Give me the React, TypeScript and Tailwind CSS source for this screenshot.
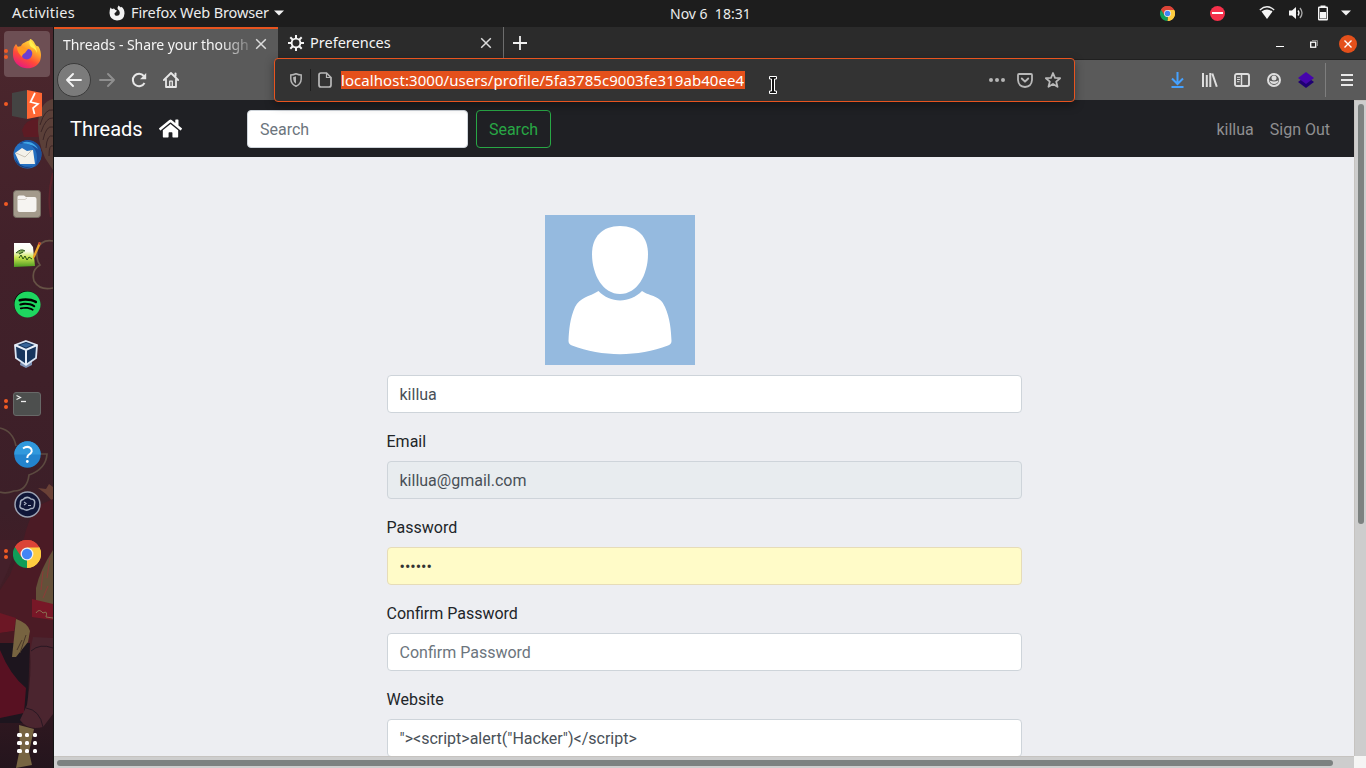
import React from "react";
import { FaHome, FaSpotify } from "react-icons/fa";

const UI = "font-['Noto_Sans','Open_Sans',sans-serif]";

function ChromeIcon({ size }: { size: number }) {
  return (
    <svg width={size} height={size} viewBox="0 0 48 48">
      <path d="M24 24L3.2 12A24 24 0 0 1 44.8 12Z" fill="#db4437" />
      <path d="M24 24L44.8 12A24 24 0 0 1 24 48Z" fill="#ffcd40" />
      <path d="M24 24L24 48A24 24 0 0 1 3.2 12Z" fill="#0f9d58" />
      <path d="M24 13H45.3A24 24 0 0 0 3.2 12L14.5 29.5Z" fill="#db4437" />
      <path d="M33.5 29.5L24 48A24 24 0 0 0 45.3 13H24Z" fill="#ffcd40" />
      <circle cx="24" cy="24" r="11" fill="#f1f1f1" />
      <circle cx="24" cy="24" r="8.8" fill="#4285f4" />
    </svg>
  );
}

function FirefoxIcon() {
  return (
    <svg width="30" height="31" viewBox="0 0 30 31" className="-mt-0.5">
      <defs>
        <linearGradient id="ff" x1="0.8" y1="0" x2="0.25" y2="1">
          <stop offset="0" stopColor="#fff44f" />
          <stop offset="0.35" stopColor="#ffa62a" />
          <stop offset="0.65" stopColor="#ff4a38" />
          <stop offset="1" stopColor="#e31587" />
        </linearGradient>
      </defs>
      <path d="M2 9L4 6L6 9L9 8C10 5 14 4 18 2C17 0 20 1 22 4C24 8 25 9 26 8C29 12 30 18 28 23C25 29 19 31 13 30C6 29 1 23 1 17C1 14 1 11 2 9Z" fill="url(#ff)" />
      <path d="M16 11C19 11 21 14 20 17C19 21 15 23 11 20C9 18 9 15 10 13Z" fill="#6b3fd1" />
      <path d="M5 9C9 8 11 10 16 11L13 15C11 16 10 17 10 19C7 16 5 13 5 9Z" fill="#ff9a22" />
      <path d="M18 2C21 6 25 9 25 15C24 12 22 10 19 9C17 7 17 4 18 2Z" fill="#fff04d" />
    </svg>
  );
}

function BurpIcon() {
  return (
    <svg width="30" height="29" viewBox="0 0 30 29">
      <path d="M0 3L15 0V29L0 26Z" fill="#444443" />
      <path d="M15 0L30 3V26L15 29Z" fill="#ff6633" />
      <path d="M23 3L18.500 12L26 14L21 18L22.500 24" fill="none" stroke="#fff" strokeWidth="1.700" />
    </svg>
  );
}

function MailIcon() {
  return (
    <svg width="31" height="31" viewBox="0 0 31 31">
      <circle cx="15.500" cy="15.500" r="14" fill="#246fc0" />
      <path d="M7 5C13 -2 24 1 28 8C31 15 29 23 23 28C26 20 26 12 20 7C16 4 11 4 7 5Z" fill="#1a4f9d" />
      <path d="M10 4C16 1 23 4 26 10C22 6 16 5 10 4Z" fill="#3fa6e8" />
      <path d="M3 14L10 9L15 12L21 11L23 25L8 25Z" fill="#f4f1ea" />
      <path d="M4 14L13 18L20 11" fill="none" stroke="#c9c2b6" />
      <path d="M3 19C7 28 15 29 21 27C16 31 4 29 3 19Z" fill="#153f7f" />
    </svg>
  );
}

function FilesIcon() {
  return (
    <svg width="28" height="28" viewBox="0 0 28 28">
      <rect x="0.500" y="0.500" width="27" height="27" rx="3" fill="#a39a8b" stroke="#777064" />
      <path d="M4.500 7Q4.500 5.500 6 5.500H11L13 7H21.500Q23.500 7 23.500 9V20Q23 22 21 22H6.500Q4.500 22 4.500 20Z" fill="#f6f4f1" />
      <path d="M5 9.500H12L14 8" fill="none" stroke="#d5d0c7" />
    </svg>
  );
}

function NotepadIcon() {
  return (
    <svg width="28" height="28" viewBox="0 0 28 28">
      <defs>
        <linearGradient id="np" x1="0" y1="0" x2="0" y2="1">
          <stop offset="0" stopColor="#fff" />
          <stop offset="0.35" stopColor="#f8fbea" />
          <stop offset="0.6" stopColor="#cbe64f" />
          <stop offset="1" stopColor="#4d9b22" />
        </linearGradient>
      </defs>
      <path d="M1 3L17 3L20 7L22 26L1 27Z" fill="url(#np)" />
      <path d="M3 13Q8 8 12 11Q9 15 3 13" fill="#8cb35a" />
      <path d="M3 13Q8 8 12 11M6 14L10 12M6 18L8 15L10 19L12 16L14 20L16 17L19 19" fill="none" stroke="#245018" strokeWidth="1" />
      <path d="M26 2L28 3L22 17L20 19L20 16Z" fill="#eda528" />
      <path d="M26 2L28 3L27 5L25 4Z" fill="#c13b31" />
    </svg>
  );
}

function BoxIcon() {
  return (
    <svg width="26" height="29" viewBox="0 0 26 29" className="-ml-[3px]">
      <path d="M8 20L7 25L13 28L19 25V20Z" fill="#7d91b4" />
      <path d="M13 1L24 5L23 18L13 25L3 18L2 5Z" fill="#17355d" stroke="#dbe6f4" strokeWidth="1.800" />
      <path d="M2 5L13 10L24 5M13 10V25" fill="none" stroke="#e9f0fa" strokeWidth="2" />
      <path d="M7 5L13 3L19 5L13 7.500Z" fill="#38659a" />
    </svg>
  );
}

function TerminalIcon() {
  return (
    <svg width="28" height="24" viewBox="0 0 28 24">
      <rect x="0.500" y="0.500" width="27" height="23" rx="2.500" fill="#4d4f4e" stroke="#686968" />
      <path d="M3.500 3.500L7.500 5.500L3.500 7.500" fill="none" stroke="#eee" strokeWidth="1.200" />
      <path d="M8 9.500H13" stroke="#eee" strokeWidth="1.300" />
    </svg>
  );
}

function HelpIcon() {
  return (
    <svg width="27" height="27" viewBox="0 0 27 27">
      <circle cx="13.500" cy="13.500" r="13.200" fill="#2384ce" />
      <path d="M0.300 13.500A13.200 13.200 0 0 1 26.700 13.500Z" fill="#3199dd" />
      <path d="M9 7.500Q13 4.500 16.500 7Q20 10.500 14.500 14Q13.300 15 13.300 17" fill="none" stroke="#fff" strokeWidth="2" />
      <circle cx="13.300" cy="20.500" r="1.400" fill="#fff" />
    </svg>
  );
}

function CloudIcon() {
  return (
    <svg width="27" height="27" viewBox="0 0 27 27">
      <circle cx="13.500" cy="13.500" r="12.500" fill="#101638" stroke="#9ca3b3" strokeWidth="1.500" />
      <path d="M9 8.500Q13 4.500 17 8Q21.500 8 20.500 13Q20.500 18 17 17.500Q13 20.500 9.500 18Q4.500 17.500 6.500 13Q6 9 9 8.500Z" fill="none" stroke="#a8b0c0" strokeWidth="1.500" />
      <path d="M10 11L12 12.500L10 14M14 14.500H17" fill="none" stroke="#a8b0c0" strokeWidth="1.200" />
    </svg>
  );
}

const dock: { icon: React.ReactNode; dots: number; active?: boolean }[] = [
  { icon: <FirefoxIcon />, dots: 2, active: true },
  { icon: <BurpIcon />, dots: 1 },
  { icon: <MailIcon />, dots: 0 },
  { icon: <FilesIcon />, dots: 1 },
  { icon: <NotepadIcon />, dots: 0 },
  {
    icon: (
      <span className="flex size-[26px] items-center justify-center rounded-full bg-black">
        <FaSpotify size={27} className="shrink-0 text-[#1ed760]" />
      </span>
    ),
    dots: 0,
  },
  { icon: <BoxIcon />, dots: 0 },
  { icon: <TerminalIcon />, dots: 2 },
  { icon: <HelpIcon />, dots: 0 },
  { icon: <CloudIcon />, dots: 0 },
  { icon: <ChromeIcon size={28} />, dots: 2 },
];

function DockArt() {
  return (
    <svg className="absolute inset-0" width="53" height="741" viewBox="0 27 53 741">
      <defs>
        <linearGradient id="dk" x1="0" y1="0" x2="0" y2="1">
          <stop offset="0" stopColor="#4c272d" />
          <stop offset="0.3" stopColor="#42212a" />
          <stop offset="0.65" stopColor="#3c1f28" />
          <stop offset="0.8" stopColor="#431c25" />
          <stop offset="1" stopColor="#24151d" />
        </linearGradient>
      </defs>
      <rect y="27" width="53" height="741" fill="url(#dk)" />
      <path d="M22 130Q26 118 39 119V137H24Z" fill="#5d1b24" />
      <path d="M53 99Q40 102 38 122Q37 140 45 158L53 170Z" fill="#5b4039" />
      <path d="M40 125Q45 108 53 110M41 132Q46 117 53 118M43 140Q46 125 53 127M46 148Q47 134 53 136M49 156Q49 144 53 146" fill="none" stroke="#3b2526" />
      <path d="M53 173Q47 195 51 217" fill="none" stroke="#5d222b" strokeWidth="2" />
      <path d="M53 241Q41 239 37 250Q36 260 40 265Q31 270 34 281Q40 291 53 288" fill="none" stroke="#665245" strokeWidth="1.700" />
      <path d="M0 428Q13 431 16 446M35 454H47Q46 469 29 475Q27 491 14 491Q6 494 0 492" fill="none" stroke="#5c4a40" strokeWidth="1.700" />
      <path d="M38 488L46 489L49 484L53 487V502L46 494Z" fill="#6a4136" />
      <path d="M53 499L37 506Q28 520 24 538L10 575L0 590V650H31L53 640Z" fill="#4b1b25" />
      <path d="M0 540V587Q13 562 17 540Z" fill="#44202a" />
      <path d="M53 550Q40 570 36 588V602L53 610Z" fill="#645039" />
      <path d="M50 558L47 578M43 571L41 590M48 586L43 598" stroke="#8d3b38" fill="none" />
      <path d="M32 599L53 604V620L32 617Z" fill="#781727" />
      <path d="M36 613Q39 608 43 613Q48 610 46 617L53 618" fill="none" stroke="#897052" />
      <path d="M0 613L16 618L14 631L0 633Z" fill="#6c1725" />
      <path d="M0 633L14 631V643H0Z" fill="#491922" />
      <path d="M0 643H30L27 723H0Z" fill="#1d151e" />
      <path d="M0 650Q10 675 26 688L24 713L0 718Z" fill="#581122" />
      <path d="M16 619Q28 623 30 631L28 642L16 657L12 657L14 638Z" fill="#776340" />
      <path d="M22 640L17 650M26 635L20 653" stroke="#493829" fill="none" />
      <path d="M33 637L53 638V714L43 727Q28 731 20 720L27 705Q32 672 30 651Z" fill="#4b252f" />
      <path d="M31 651Q40 643 53 648M26 708Q40 710 43 727" fill="none" stroke="#291722" />
      <path d="M19 725L34 729L29 752L32 765L16 768L20 748Z" fill="#776542" />
    </svg>
  );
}

function Dock() {
  return (
    <aside className="relative flex w-[54px] shrink-0 flex-col border-r border-[#151515] bg-[#42212a]">
      <DockArt />
      <div className="relative flex flex-1 flex-col pt-0.5">
        {dock.map((d, i) => (
          <div key={i} className="flex h-[50px] items-center pl-1">
            <div className="-mr-px flex w-0 flex-col gap-0.5">
              {Array.from({ length: d.dots }, (_, k) => (
                <i key={k} className="size-1 shrink-0 rounded-full bg-[#f15a24]" />
              ))}
            </div>
            <div
              className={
                d.active
                  ? "ml-px flex size-[46px] items-center justify-center rounded bg-[#6d4f54]"
                  : "ml-px flex size-[46px] items-center justify-center"
              }
            >
              {d.icon}
            </div>
            {d.active && (
              <div className="-ml-[46px] flex w-1 flex-col gap-0.5">
                <i className="size-1 rounded-full bg-[#f15a24]" />
                <i className="size-1 rounded-full bg-[#f15a24]" />
              </div>
            )}
          </div>
        ))}
        <div className="mt-auto mb-[15px] ml-[17px] grid w-5 grid-cols-3 gap-[3.500px]">
          {Array.from({ length: 9 }, (_, k) => (
            <i key={k} className="size-[4.500px] rounded-[1.500px] bg-white" />
          ))}
        </div>
      </div>
    </aside>
  );
}

function TopBar() {
  return (
    <header className={`flex h-[27px] shrink-0 items-center bg-[#1d1d1d] pb-px text-[14.500px] text-[#ececec] ${UI}`}>
      <div className="flex w-[600px] items-center pl-3">
        <span className="w-[97px] whitespace-nowrap tracking-[0.250px]">Activities</span>
        <svg width="16" height="16" viewBox="0 0 16 16" fill="#f2f2f2">
          <path d="M1.500 2.500L3 4L5 3.600L6.500 5L8 5.600L7 7L5.500 8.200Q5.500 10.800 8 10.800Q10.800 10.600 10.800 7.800Q10.600 5.500 9 4.500Q8 2.500 9.500 0.500Q10.500 1.500 12 2.500L12.500 1.800Q15.500 4 15.500 8.500Q15 15.500 8 15.500Q0.800 15 0.500 8Q0.500 5 1.500 2.500Z" />
        </svg>
        <span className="ml-1.5 w-[138px] whitespace-nowrap tracking-[-0.120px]">Firefox Web Browser</span>
        <svg className="ml-[5px]" width="10" height="6" viewBox="0 0 10 6"><path d="M0 0.500H10L5 5.500Z" fill="#f2f2f2" /></svg>
      </div>
      <span className="ml-[70px] w-[80px] whitespace-pre text-[14px]">Nov 6  18:31</span>
      <div className="ml-auto flex items-center pr-[15px]">
        <ChromeIcon size={15} />
        <span className="ml-[35px] flex size-[15px] items-center justify-center rounded-full bg-[#f5304a]">
          <i className="h-0.5 w-[11px] bg-white" />
        </span>
        <svg className="ml-[34px]" width="16" height="14" viewBox="0 0 16 14">
          <path d="M0.800 4Q8 -2.500 15.200 4" fill="none" stroke="#eee" strokeWidth="1.300" />
          <path d="M2.500 5.500Q8 1.500 13.500 5.500L8 13Z" fill="#f5f5f5" />
        </svg>
        <svg className="ml-[13px]" width="16" height="14" viewBox="0 0 16 14">
          <path d="M1 4.500H4L8 1V13L4 9.500H1Z" fill="#f5f5f5" />
          <path d="M10 4.500Q12 7 10 9.500" fill="none" stroke="#f5f5f5" strokeWidth="1.300" />
          <path d="M12 2Q16 7 12 12" fill="none" stroke="#aaa" strokeWidth="1.300" />
        </svg>
        <svg className="ml-[13px]" width="12" height="16" viewBox="0 0 12 16">
          <path d="M3.500 0.500H8.500V2.500H3.500Z" fill="#f5f5f5" />
          <rect x="1.700" y="2.200" width="8.600" height="12.600" rx="0.500" fill="none" stroke="#f5f5f5" strokeWidth="1.400" />
          <rect x="3" y="7" width="6" height="6.500" fill="#f5f5f5" />
        </svg>
        <svg className="ml-3" width="10" height="6" viewBox="0 0 10 6"><path d="M0 0.500H10L5 5.500Z" fill="#f2f2f2" /></svg>
      </div>
    </header>
  );
}

function Cross() {
  return (
    <svg width="12" height="12" viewBox="0 0 12 12" fill="none" stroke="#dcdcdc" strokeWidth="1.500">
      <path d="M1.200 1.200L10.800 10.800M10.800 1.200L1.200 10.800" />
    </svg>
  );
}

function TabStrip() {
  return (
    <div className={`flex h-[33px] shrink-0 border-b border-[#202020] bg-[#2b2b2b] text-[14px] text-[#f5f5f5] ${UI}`}>
      <div className="-mb-px flex w-[224px] items-center border-t-2 border-[#e8541f] bg-[#5a5a5a] pb-px pl-[9px]">
        <span className="w-[187px] whitespace-nowrap tracking-[-0.080px] [mask-image:linear-gradient(to_right,black_84%,transparent_104%)]">
          Threads - Share your though
        </span>
        <span className="ml-[5px]"><Cross /></span>
      </div>
      <div className="flex w-[226px] items-center border-r border-[#6d6d6d] pl-[9px]">
        <svg width="18" height="16" viewBox="0 0 18 16" fill="none" stroke="#f5f5f5">
          <circle cx="9" cy="8" r="4.400" strokeWidth="1.900" />
          <path d="M9 0V4M9 12V16M1 8H5M13 8H17M3.300 2.300L6 5M12 11L14.700 13.700M14.700 2.300L12 5M6 11L3.300 13.700" strokeWidth="2" />
        </svg>
        <span className="-mt-px ml-[5px] w-[170px] text-[14.500px]">Preferences</span>
        <Cross />
      </div>
      <div className="flex w-8 items-center justify-center">
        <svg width="14" height="14" viewBox="0 0 14 14" stroke="#f0f0f0" strokeWidth="1.800"><path d="M7 0V14M0 7H14" /></svg>
      </div>
      <div className="ml-auto flex items-center pt-px pr-[9px]">
        <i className="mt-[5px] h-px w-2 bg-white" />
        <svg className="ml-[26px]" width="8" height="8" viewBox="0 0 8 8" fill="none">
          <path d="M2 0.500H7.500V6" stroke="#8d8d8d" />
          <rect x="0.700" y="2.200" width="5" height="5" stroke="#fff" strokeWidth="1.300" />
        </svg>
        <span className="ml-[21px] flex size-[18px] items-center justify-center rounded-full bg-[#e4501b]">
          <svg width="8" height="8" viewBox="0 0 8 8" stroke="#fff" strokeWidth="1.400"><path d="M0.500 0.500L7.500 7.500M7.500 0.500L0.500 7.500" /></svg>
        </span>
      </div>
    </div>
  );
}

function UrlBar() {
  return (
    <div className="relative z-10 ml-[95px] flex h-11 w-[801px] shrink-0 items-center rounded border border-[#e8541f] bg-[#333] shadow-[0_3px_10px_rgba(0,0,0,0.4)]">
      <svg className="ml-[15px]" width="12" height="14" viewBox="0 0 12 14" fill="none" stroke="#b5b5b5">
        <path d="M6 0.800Q8.500 2 11.200 2V6Q11 11 6 13.200Q1 11 0.800 6V2Q3.500 2 6 0.800Z" strokeWidth="1.500" />
        <path d="M6 3.200V10.800Q3.300 9 3.200 6V4Q4.500 4 6 3.200Z" fill="#b5b5b5" stroke="none" />
      </svg>
      <i className="ml-2 h-[22px] w-px bg-[#1e1e1e]" />
      <svg className="ml-[7px]" width="14" height="16" viewBox="0 0 14 16" fill="none" stroke="#b9b9b9" strokeWidth="1.700">
        <path d="M3 1H8.500L13 5.500V13Q13 15 11 15H3Q1 15 1 13V3Q1 1 3 1Z" />
        <path d="M8.500 1V5.500H13" strokeWidth="1.200" />
      </svg>
      <span className="ml-[9px] flex h-[18px] w-[404px] items-center whitespace-nowrap bg-[#e4501b] text-[15px] tracking-[0.060px] text-white">
        localhost:3000/users/profile/5fa3785c9003fe319ab40ee4
      </span>
      <svg className="mt-[10px] ml-6" width="8" height="18" viewBox="0 0 8 18">
        <path d="M0.500 0.500H7.500V3H5.500V15H7.500V17.500H0.500V15H2.500V3H0.500Z" fill="#111" stroke="#fff" />
      </svg>
      <svg className="ml-auto" width="16" height="4" viewBox="0 0 16 4" fill="#b5b5b5">
        <circle cx="2" cy="2" r="2" /><circle cx="8" cy="2" r="2" /><circle cx="14" cy="2" r="2" />
      </svg>
      <svg className="ml-3" width="16" height="15" viewBox="0 0 16 15" fill="none" stroke="#b9b9b9" strokeLinecap="round" strokeLinejoin="round">
        <path d="M2 1H14Q15 1 15 2V7Q14.500 13.500 8 14Q1.500 13.500 1 7V2Q1 1 2 1Z" strokeWidth="1.800" />
        <path d="M4.800 5.500L8 8.700L11.200 5.500" strokeWidth="1.900" />
      </svg>
      <svg className="mr-[13px] ml-3" width="16" height="16" viewBox="0 0 16 16" fill="none" stroke="#b9b9b9" strokeWidth="1.800" strokeLinejoin="round">
        <path d="M8 1L10 5.800L15.100 6.200L11.200 9.600L12.500 14.800L8 12L3.500 14.800L4.800 9.600L0.900 6.200L6 5.800Z" />
      </svg>
    </div>
  );
}

function Toolbar() {
  return (
    <div className={`flex h-10 shrink-0 items-center bg-[#5a5a5a] ${UI}`}>
      <span className="ml-[3px] flex size-[34px] shrink-0 items-center justify-center rounded-full border border-[#3b3b3b] bg-[#7b7b7b]">
        <svg width="16" height="14" viewBox="0 0 16 14" fill="none" stroke="#f2f2f2" strokeWidth="1.900" strokeLinecap="round" strokeLinejoin="round"><path d="M7 1L1 7L7 13M1 7H15" /></svg>
      </span>
      <svg className="ml-2 shrink-0" width="16" height="14" viewBox="0 0 16 14" fill="none" stroke="#8f8f8f" strokeWidth="1.900" strokeLinecap="round" strokeLinejoin="round"><path d="M9 1L15 7L9 13M15 7H1" /></svg>
      <svg className="ml-4 shrink-0" width="16" height="16" viewBox="0 0 16 16" fill="none" stroke="#e6e6e6" strokeWidth="2">
        <path d="M13.500 11A6.200 6.200 0 1 1 12.800 4" />
        <path d="M15.200 1V7.200H9Z" fill="#e6e6e6" stroke="none" />
      </svg>
      <svg className="ml-4 shrink-0" width="16" height="16" viewBox="0 0 16 16" fill="none" stroke="#e6e6e6" strokeLinejoin="round" strokeLinecap="round">
        <path d="M0.900 8L8 1L15.100 8" strokeWidth="1.800" />
        <path d="M3 7.500V15H13V7.500" strokeWidth="1.800" />
        <path d="M12.500 1.500V4" strokeWidth="2" />
        <path d="M6.700 15V9.200H9.300V15" strokeWidth="1.300" />
      </svg>
      <UrlBar />
      <div className="ml-auto flex items-center pr-[13px]">
        <svg width="13" height="16" viewBox="0 0 13 16" fill="none" stroke="#45a1ff" strokeWidth="2"><path d="M6.500 0V12M1 6.500L6.500 12L12 6.500M0.500 15H12.500" /></svg>
        <svg className="ml-[18px]" width="16" height="14" viewBox="0 0 16 14" stroke="#dedede" strokeWidth="2"><path d="M1 0V14M4.800 2V14M8.300 0V14M10.300 0.500L14.800 13.700" /></svg>
        <svg className="ml-4" width="16" height="14" viewBox="0 0 16 14" fill="none" stroke="#dedede">
          <rect x="1" y="1" width="14" height="12" rx="1.800" strokeWidth="1.900" />
          <path d="M7.500 1V13" strokeWidth="1.500" /><path d="M3 4.300H6M3 6.500H6M3 8.700H5.500" />
        </svg>
        <svg className="ml-[17px]" width="14" height="14" viewBox="0 0 14 14">
          <circle cx="7" cy="7" r="6" fill="none" stroke="#dedede" strokeWidth="2" />
          <circle cx="7" cy="5" r="2.500" fill="#dedede" />
          <path d="M2.500 7.200Q7 10 11.500 7.200Q11 11 7 11Q3 11 2.500 7.200Z" fill="#dedede" />
        </svg>
        <svg className="ml-[17px]" width="16" height="16" viewBox="0 0 16 16">
          <path d="M0 10L8 4L16 10L8 16Z" fill="#1f0073" /><path d="M0 6L8 0L16 6L8 12Z" fill="#4605ad" />
        </svg>
        <i className="ml-[11px] h-[34px] w-px bg-[#7e7e7e]" />
        <svg className="ml-[15px]" width="12" height="12" viewBox="0 0 12 12" stroke="#e8e8e8" strokeWidth="2"><path d="M0 1H12M0 6H12M0 11H12" /></svg>
      </div>
    </div>
  );
}

function Field({ label, value, className }: { label?: string; value: string; className: string }) {
  return (
    <div className="mb-4">
      {label && <label className="mb-2 -ml-[0.500px] block h-6 pt-px leading-6">{label}</label>}
      <div className={`flex h-[38px] items-center rounded border pt-0.5 pl-[11.500px] ${className}`}>{value}</div>
    </div>
  );
}

function Avatar() {
  return (
    <svg className="mb-2.5 ml-[158px] block" width="150" height="150" viewBox="0 0 150 150">
      <rect width="150" height="150" fill="#95badf" />
      <path d="M75 11C93 11 103 22 103 39C103 60 92 79 75 79C58 79 47 60 47 39C47 22 57 11 75 11Z" fill="#fff" />
      <path d="M53.500 76C65 88.500 85 88.500 97 76C106 82 115 80 120 92C125 103 126 115 126.500 126Q126.500 129 123 130.500C93 142 57 142 27 130.500Q23.500 129 23.500 126C24 115 25 103 30 92C35 82 44 82 53.500 76Z" fill="#fff" />
    </svg>
  );
}

function Page() {
  return (
    <div className="flex min-h-0 flex-1 bg-[#edeef2] font-[Roboto,sans-serif] text-base text-[#212529]">
      <div className="flex min-w-0 flex-1 flex-col">
        <nav className="flex h-[57px] shrink-0 items-center bg-[#1f2024] pl-4">
          <span className="w-[89px] text-xl text-white">Threads</span>
          <FaHome size={23} className="text-white" />
          <div className="ml-[65px] flex h-[38px] w-[221px] items-center rounded border border-[#ced4da] bg-white px-3 pt-0.5 text-[#6c757d]">Search</div>
          <button className="ml-2 h-[38px] w-[75px] rounded border border-[#28a745] pt-0.5 text-[#28a745]">Search</button>
          <div className="ml-auto flex gap-4 pt-0.5 pr-6 text-[#8f8f91]">
            <span>killua</span>
            <span>Sign Out</span>
          </div>
        </nav>
        <main className="min-h-0 flex-1 overflow-hidden pt-[58px] pl-[333px]">
          <div className="w-[635px]">
            <Avatar />
            <Field value="killua" className="border-[#ced4da] bg-white text-[#495057]" />
            <Field label="Email" value="killua@gmail.com" className="border-[#ced4da] bg-[#e8ecef] text-[#495057]" />
            <Field label="Password" value="••••••" className="border-[#e6dcb8] bg-[#fffbc8] text-[#333]" />
            <Field label="Confirm Password" value="Confirm Password" className="border-[#ced4da] bg-white text-[#6c757d]" />
            <Field label="Website" value={'"><script>alert("Hacker")</script>'} className="border-[#ced4da] bg-white text-[#495057]" />
          </div>
        </main>
        <div className="flex h-3 shrink-0 items-center border-t border-[#c6c3c0] bg-[#cdcdcd] pl-[3px]">
          <i className="h-1.5 w-[1276px] rounded-full bg-[#7c8180]" />
        </div>
      </div>
      <div className="flex w-3 shrink-0 flex-col bg-[#cdcdcd]">
        <div className="flex flex-1 justify-center border-t border-l border-[#c6c3c0] pt-[3px]">
          <i className="h-[420px] w-1.5 rounded-full bg-[#7c8180]" />
        </div>
        <div className="h-3 bg-[#f5f5f4]" />
      </div>
    </div>
  );
}

export default function App() {
  return (
    <div className="flex h-[768px] w-[1366px] flex-col overflow-hidden">
      <TopBar />
      <div className="flex min-h-0 flex-1">
        <Dock />
        <div className="flex min-w-0 flex-1 flex-col">
          <TabStrip />
          <Toolbar />
          <Page />
        </div>
      </div>
    </div>
  );
}
